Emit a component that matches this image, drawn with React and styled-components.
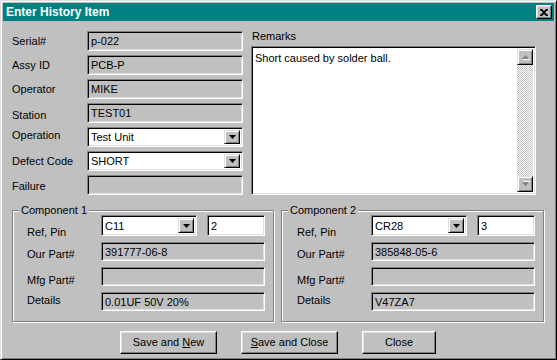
import React from "react";
import styled, { createGlobalStyle } from "styled-components";

const GlobalStyle = createGlobalStyle`
  html, body {
    margin: 0;
    padding: 0;
    background: #c0c0c0;
  }
  body {
    font-family: "Liberation Sans", Arial, sans-serif;
    font-size: 11px;
    color: #000;
  }
`;

const Window = styled.div`
  width: 557px;
  height: 360px;
  box-sizing: border-box;
  background: #c0c0c0;
  border: 1px solid;
  border-color: #dfdfdf #000 #000 #dfdfdf;
  box-shadow: inset 1px 1px #fff, inset -1px -1px #808080;
  padding: 2px;
  display: flex;
  flex-direction: column;
`;

const TitleBar = styled.div`
  height: 18px;
  background: #008080;
  display: flex;
  align-items: center;
  justify-content: space-between;
  padding: 0 2px 0 3px;
  color: #fff;
  font-weight: bold;
  font-size: 12px;
`;

const CloseButton = styled.div`
  width: 16px;
  height: 14px;
  box-sizing: border-box;
  background: #c0c0c0;
  border: 1px solid;
  border-color: #fff #000 #000 #fff;
  box-shadow: inset -1px -1px #808080, inset 1px 1px #dfdfdf;
  display: flex;
  align-items: center;
  justify-content: center;
`;

const Body = styled.div`
  flex: 1;
  padding: 10px 0 0 9px;
  display: flex;
  flex-direction: column;
`;

const TopRow = styled.div`
  display: flex;
  gap: 8px;
`;

const FormGrid = styled.div`
  display: grid;
  grid-template-columns: 75px 156px;
  grid-auto-rows: 20px;
  row-gap: 4px;
`;

const Label = styled.div`
  display: flex;
  align-items: center;
  white-space: nowrap;
  transform: translateY(${(p) => p.$shift || 0}px);
`;

const Field = styled.div`
  box-sizing: border-box;
  height: ${(p) => p.$h || 20}px;
  background: ${(p) => (p.$white ? "#fff" : "#c0c0c0")};
  border: 1px solid;
  border-color: #808080 #fff #fff #808080;
  box-shadow: inset 1px 1px #000, inset -1px -1px #dfdfdf;
  padding: 0 3px;
  display: flex;
  align-items: center;
  white-space: nowrap;
  overflow: hidden;
  grid-column: ${(p) => p.$span || "auto"};
`;

const Combo = styled(Field)`
  background: #fff;
  padding: 2px 2px 2px 3px;
  justify-content: space-between;
`;

const DropButton = styled.div`
  width: 16px;
  align-self: stretch;
  box-sizing: border-box;
  background: #c0c0c0;
  border: 1px solid;
  border-color: #dfdfdf #000 #000 #dfdfdf;
  box-shadow: inset 1px 1px #fff, inset -1px -1px #808080;
  display: flex;
  align-items: center;
  justify-content: center;
`;

const RemarksCol = styled.div`
  width: 285px;
  display: flex;
  flex-direction: column;
`;

const RemarksLabel = styled.div`
  height: 15px;
  padding-left: 1px;
  line-height: 11px;
`;

const TextArea = styled.div`
  height: 149px;
  box-sizing: border-box;
  background: #fff;
  border: 1px solid;
  border-color: #808080 #fff #fff #808080;
  box-shadow: inset 1px 1px #000, inset -1px -1px #dfdfdf;
  padding: 2px;
  display: flex;
`;

const RemarkText = styled.div`
  flex: 1;
  padding: 3px 0 0 1px;
`;

const ScrollBar = styled.div`
  width: 16px;
  display: flex;
  flex-direction: column;
  justify-content: space-between;
  background: repeating-conic-gradient(#fff 0 25%, #c0c0c0 0 50%) 0 0 / 2px 2px;
`;

const ScrollButton = styled.div`
  width: 16px;
  height: 16px;
  box-sizing: border-box;
  background: #c0c0c0;
  border: 1px solid;
  border-color: #dfdfdf #000 #000 #dfdfdf;
  box-shadow: inset 1px 1px #fff, inset -1px -1px #808080;
  display: flex;
  align-items: center;
  justify-content: center;
`;

const GroupRow = styled.div`
  display: flex;
  gap: 7px;
  margin-top: 15px;
`;

const Group = styled.div`
  position: relative;
  width: ${(p) => p.$w}px;
  height: 112px;
  box-sizing: border-box;
  border: 1px solid #808080;
  box-shadow: 1px 1px 0 #fff, inset 1px 1px 0 #fff;
  padding: 4px 0 0 ${(p) => p.$pl}px;
`;

const Legend = styled.div`
  position: absolute;
  top: -7px;
  left: 6px;
  padding: 0 2px;
  background: #c0c0c0;
  line-height: 13px;
`;

const GroupGrid = styled.div`
  display: grid;
  grid-template-columns: 64px 96px 58px;
  grid-template-rows: 21px 19px 19px 19px;
  column-gap: 10px;
  row-gap: 6px;
`;

const ButtonRow = styled.div`
  display: flex;
  gap: 24px;
  margin: 9px 0 0 108px;
`;

const Button = styled.div`
  width: ${(p) => p.$w}px;
  height: 23px;
  box-sizing: border-box;
  background: #c0c0c0;
  border: 1px solid;
  border-color: #fff #000 #000 #fff;
  box-shadow: inset -1px -1px #808080, inset 1px 1px #dfdfdf;
  display: flex;
  align-items: center;
  justify-content: center;
  padding-bottom: 1px;
  u {
    text-decoration: underline;
  }
`;

const DownArrow = () => (
  <svg width="7" height="4" viewBox="0 0 7 4">
    <path d="M0 0h7L3.5 4z" fill="#000" />
  </svg>
);

const GreyArrow = ({ up }) => (
  <svg width="9" height="6" viewBox="0 0 9 6" style={{ transform: up ? "none" : "scaleY(-1)" }}>
    <path d="M1 5h7L4.5 1z" fill="#808080" />
    <path d="M2 5.5h7" stroke="#fff" strokeWidth="1" />
  </svg>
);

const ComboBox = ({ value, h }) => (
  <Combo $h={h}>
    <span>{value}</span>
    <DropButton>
      <DownArrow />
    </DropButton>
  </Combo>
);

const ComponentGroup = ({ title, w, pl, refVal, pin, ourPart, mfgPart, details }) => (
  <Group $w={w} $pl={pl}>
    <Legend>{title}</Legend>
    <GroupGrid>
      <Label $shift={6}>Ref, Pin</Label>
      <ComboBox value={refVal} h={21} />
      <Field $white $h={21}>{pin}</Field>
      <Label $shift={2}>Our Part#</Label>
      <Field $h={19} $span="2 / 4">{ourPart}</Field>
      <Label $shift={3}>Mfg Part#</Label>
      <Field $h={19} $span="2 / 4">{mfgPart}</Field>
      <Label $shift={-2}>Details</Label>
      <Field $h={19} $span="2 / 4">{details}</Field>
    </GroupGrid>
  </Group>
);

export default function App() {
  return (
    <>
      <GlobalStyle />
      <Window>
        <TitleBar>
          <span>Enter History Item</span>
          <CloseButton>
            <svg width="8" height="7" viewBox="0 0 8 7">
              <path d="M0 0h2l2 2 2-2h2v1L5 3.5 8 6v1H6L4 5 2 7H0V6l3-2.5L0 1z" fill="#000" />
            </svg>
          </CloseButton>
        </TitleBar>
        <Body>
          <TopRow>
            <FormGrid>
              <Label>Serial#</Label>
              <Field>p-022</Field>
              <Label>Assy ID</Label>
              <Field>PCB-P</Field>
              <Label>Operator</Label>
              <Field>MIKE</Field>
              <Label $shift={2}>Station</Label>
              <Field>TEST01</Field>
              <Label $shift={-2}>Operation</Label>
              <ComboBox value="Test Unit" />
              <Label>Defect Code</Label>
              <ComboBox value="SHORT" />
              <Label $shift={1}>Failure</Label>
              <Field />
            </FormGrid>
            <RemarksCol>
              <RemarksLabel>Remarks</RemarksLabel>
              <TextArea>
                <RemarkText>Short caused by solder ball.</RemarkText>
                <ScrollBar>
                  <ScrollButton>
                    <GreyArrow up />
                  </ScrollButton>
                  <ScrollButton>
                    <GreyArrow />
                  </ScrollButton>
                </ScrollBar>
              </TextArea>
            </RemarksCol>
          </TopRow>
          <GroupRow>
            <ComponentGroup
              title="Component 1"
              w={262}
              pl={14}
              refVal="C11"
              pin="2"
              ourPart="391777-06-8"
              mfgPart=""
              details="0.01UF 50V 20%"
            />
            <ComponentGroup
              title="Component 2"
              w={263}
              pl={15}
              refVal="CR28"
              pin="3"
              ourPart="385848-05-6"
              mfgPart=""
              details="V47ZA7"
            />
          </GroupRow>
          <ButtonRow>
            <Button $w={97}>
              Save and&nbsp;<u>N</u>ew
            </Button>
            <Button $w={97}>
              <u>S</u>ave and Close
            </Button>
            <Button $w={74}>Close</Button>
          </ButtonRow>
        </Body>
      </Window>
    </>
  );
}
